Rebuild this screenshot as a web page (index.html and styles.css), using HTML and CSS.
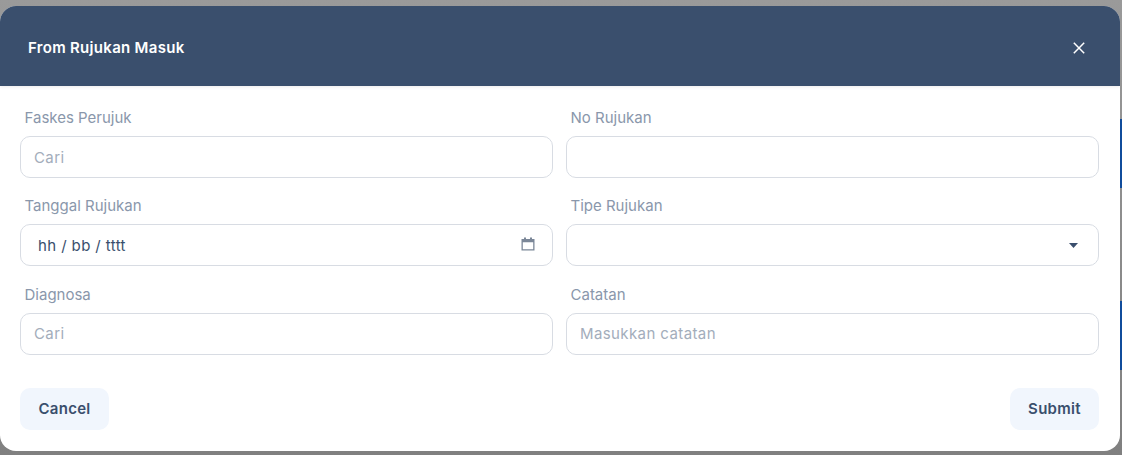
FILE: index.html
```html
<!DOCTYPE html>
<html>
<head>
    <title>From Rujukan Masuk</title>
    <link rel="stylesheet" href="styles.css">
</head>
<body>
    <div class="page-edge edge-one"></div>
    <div class="page-edge edge-two"></div>
    <div class="modal">
        <div class="modal-header">
            <h4>From Rujukan Masuk</h4>
            <button type="button" class="close-btn">
                <svg width="12" height="12" viewBox="0 0 12 12"><path d="M0.8 0.8L11.2 11.2M11.2 0.8L0.8 11.2" stroke="#fff" stroke-width="1.5" fill="none"/></svg>
            </button>
        </div>
        <div class="modal-body">
            <div class="field">
                <label>Faskes Perujuk</label>
                <input type="text" placeholder="Cari">
            </div>
            <div class="field">
                <label>No Rujukan</label>
                <input type="text">
            </div>
            <div class="field">
                <label>Tanggal Rujukan</label>
                <div class="input-wrap">
                    <input type="text" class="date-input" value="hh / bb / tttt">
                    <svg class="date-icon" width="14" height="14" viewBox="0 0 14 14"><path d="M3 0.5h2v1.5h4v-1.5h2v1.5h2.5v11.5h-13v-11.5h2.5zM1.8 5.2v7h10.4v-7z" fill="#7b8798"/></svg>
                </div>
            </div>
            <div class="field">
                <label>Tipe Rujukan</label>
                <div class="input-wrap">
                    <input type="text">
                    <svg class="select-icon" width="9" height="5" viewBox="0 0 9 5"><path d="M0 0h9L4.5 5z" fill="#3a4f6d"/></svg>
                </div>
            </div>
            <div class="field">
                <label>Diagnosa</label>
                <input type="text" placeholder="Cari">
            </div>
            <div class="field">
                <label>Catatan</label>
                <input type="text" placeholder="Masukkan catatan">
            </div>
        </div>
        <div class="modal-footer">
            <button type="button" class="btn">Cancel</button>
            <button type="button" class="btn">Submit</button>
        </div>
    </div>
</body>
</html>
```

FILE: styles.css
```css
html, body {
    height: 100%;
}
body {
    margin: 0;
    padding: 6px 2px 4px 0;
    box-sizing: border-box;
    background-image: linear-gradient(to bottom, #9a9a9a, #808080);
    font-family: Inter, "Open Sans", sans-serif;
    overflow: hidden;
}
.page-edge {
    position: absolute;
    right: 0;
    width: 2px;
    height: 69px;
    background-color: #104c9c;
}
.edge-one {
    top: 119px;
}
.edge-two {
    top: 301px;
}
.modal {
    position: relative;
    background-color: white;
    height: 445px;
    border-radius: 16px;
    overflow: hidden;
}
.modal-header {
    background-color: #3a4f6d;
    height: 80px;
    box-sizing: border-box;
    padding: 3px 35px 0 28px;
    display: flex;
    align-items: center;
    justify-content: space-between;
    box-shadow: 0 1px 3px rgba(0, 0, 0, 0.08);
}
.modal-header h4 {
    margin: 0;
    color: white;
    font-size: 15px;
    font-weight: 600;
    letter-spacing: 0.3px;
}
.close-btn {
    background: none;
    border: none;
    padding: 0;
    display: flex;
}
.modal-body {
    display: grid;
    grid-template-columns: 533px 533px;
    column-gap: 13px;
    row-gap: 16.4px;
    padding: 20px 21px 0 20px;
}
.field label {
    display: block;
    height: 30px;
    padding-left: 4.5px;
    color: #8a97ab;
    font-size: 15px;
    line-height: 23px;
}
.field input {
    display: block;
    width: 100%;
    height: 42px;
    box-sizing: border-box;
    padding: 0 13px;
    border: 1px solid #d8dce3;
    border-radius: 10px;
    font-family: inherit;
    font-size: 15px;
    letter-spacing: 0.4px;
    color: #3a4f6d;
    outline: none;
}
.field input::placeholder {
    color: #a3adbb;
}
.field input.date-input {
    padding-left: 17px;
}
.input-wrap {
    position: relative;
}
.date-icon {
    position: absolute;
    right: 18px;
    top: 13px;
}
.select-icon {
    position: absolute;
    right: 21px;
    top: 19px;
}
.modal-footer {
    display: flex;
    justify-content: space-between;
    padding: 33px 21px 0 20px;
}
.btn {
    width: 89px;
    height: 42px;
    border: none;
    border-radius: 10px;
    background-color: #f1f6fd;
    color: #3a4f6d;
    font-family: inherit;
    font-size: 15px;
    font-weight: 600;
    letter-spacing: 0.3px;
}
```
